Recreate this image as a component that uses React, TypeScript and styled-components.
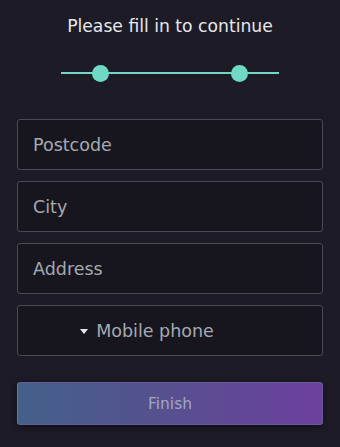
import * as React from 'react';
import styled, { createGlobalStyle } from 'styled-components';

const GlobalStyle = createGlobalStyle`
  html, body {
    margin: 0;
    padding: 0;
    background: #1c1b26;
  }
  body {
    font-family: "DejaVu Sans", "Open Sans", sans-serif;
  }
`;

const Page = styled.div`
  width: 340px;
  height: 447px;
  box-sizing: border-box;
  padding: 15px 17px 0;
  background: #1c1b26;
  display: flex;
  flex-direction: column;
`;

const Title = styled.h1`
  margin: 0;
  text-align: center;
  font-size: 17.2px;
  font-weight: normal;
  line-height: 22px;
  color: #e6e8ec;
`;

const Steps = styled.div`
  position: relative;
  margin: 28px auto 0;
  width: 218px;
  height: 16px;
  display: flex;
  align-items: center;
  justify-content: space-between;
  padding: 0 31px 0 31px;
  box-sizing: border-box;

  &:before {
    content: '';
    position: absolute;
    left: 0;
    right: 0;
    top: 7px;
    height: 2px;
    background: #6fd9c6;
  }
`;

const Dot = styled.span`
  position: relative;
  width: 17px;
  height: 17px;
  border-radius: 50%;
  background: #6fd9c6;
`;

const Form = styled.form`
  margin-top: 38px;
  display: flex;
  flex-direction: column;
  gap: 11px;
`;

const Field = styled.input`
  box-sizing: border-box;
  width: 306px;
  height: 51px;
  padding: 0 15px;
  background: #17161f;
  border: 1px solid #4a4a56;
  border-radius: 3px;
  color: #e6e8ec;
  font-family: inherit;
  font-size: 17.5px;
  outline: none;

  &::placeholder {
    color: #a6a9b0;
  }
`;

const Select = styled.div`
  box-sizing: border-box;
  width: 306px;
  height: 51px;
  padding-right: 46px;
  background: #17161f;
  border: 1px solid #4a4a56;
  border-radius: 3px;
  display: flex;
  align-items: center;
  justify-content: center;
  gap: 8px;
  color: #a6a9b0;
  font-size: 17.5px;
`;

const Caret = styled.span`
  width: 0;
  height: 0;
  border-left: 4.5px solid transparent;
  border-right: 4.5px solid transparent;
  border-top: 5px solid #e6e8ec;
  margin-top: 2px;
`;

const Button = styled.button`
  margin-top: 15px;
  width: 306px;
  height: 43px;
  border: 1px solid #6a5a9a;
  border-left-color: #5a7aa8;
  border-radius: 3px;
  background: linear-gradient(90deg, #43608a 0%, #55518f 45%, #6d3f9e 100%);
  color: #a3a6c0;
  font-family: inherit;
  font-size: 15.5px;
  cursor: pointer;
  box-shadow: 0 2px 6px rgba(0, 0, 0, 0.4);
`;

const App = () => (
  <>
    <GlobalStyle />
    <Page>
      <Title>Please fill in to continue</Title>
      <Steps>
        <Dot />
        <Dot />
      </Steps>
      <Form onSubmit={e => e.preventDefault()}>
        <Field placeholder="Postcode" />
        <Field placeholder="City" />
        <Field placeholder="Address" />
        <Select>
          <Caret />
          Mobile phone
        </Select>
        <Button type="submit">Finish</Button>
      </Form>
    </Page>
  </>
);

export default App;
